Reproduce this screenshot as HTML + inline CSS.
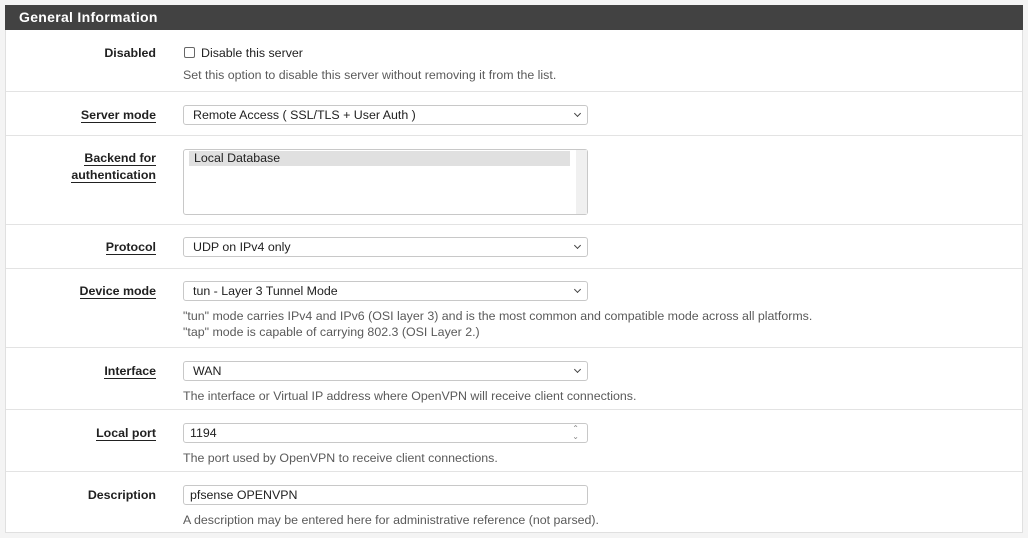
<!DOCTYPE html>
<html><head><style>
body{margin:0;width:1028px;height:538px;background:#f4f4f4;font-family:"Liberation Sans",sans-serif;font-size:12.4px;color:#212121;position:relative;overflow:hidden}
.panel{position:absolute;left:5px;top:5px;width:1018px;height:528px;background:#fff;border:1px solid #e0e0e0;box-sizing:border-box}
.hd{position:absolute;left:5px;top:5px;width:1018px;height:25px;background:#424242;color:#fff;font-size:14px;font-weight:bold;line-height:25px;padding-left:14px;box-sizing:border-box;letter-spacing:.3px}
.ln{position:absolute;left:6px;width:1016px;height:1px;background:#e3e3e3}
.lb{position:absolute;right:872px;font-weight:bold;text-align:right;line-height:17px}
.lb u{text-decoration:none;border-bottom:1px solid #212121}
.ct{position:absolute;left:183px;width:405px;height:20px;border:1px solid #c8c8c8;border-radius:3px;box-sizing:border-box;line-height:18px;padding-left:9px;background:#fff}
.ct.sel::after{content:"";position:absolute;right:7px;top:5px;width:4px;height:4px;border-right:1px solid #444;border-bottom:1px solid #444;transform:rotate(45deg)}
.hp{position:absolute;left:183px;color:#5a5a5a;line-height:16px}
.tx{position:absolute;left:183px;line-height:16px}
</style></head><body>
<div class="panel"></div>
<div class="hd">General Information</div>

<div class="lb" style="top:45px">Disabled</div>
<div style="position:absolute;left:184px;top:47px;width:9px;height:9px;border:1px solid #666;border-radius:2px"></div>
<div class="tx" style="left:201px;top:45px">Disable this server</div>
<div class="hp" style="top:67px">Set this option to disable this server without removing it from the list.</div>
<div class="ln" style="top:91px"></div>

<div class="lb" style="top:107px"><u>Server mode</u></div>
<div class="ct sel" style="top:105px;line-height:19px">Remote Access ( SSL/TLS + User Auth )</div>
<div class="ln" style="top:135px"></div>

<div class="lb" style="top:150px;line-height:17px"><u>Backend for</u><br><u>authentication</u></div>
<div class="ct" style="top:149px;height:66px;padding:0">
<div style="position:absolute;left:5px;top:1px;width:381px;height:15px;background:#e0e0e0;line-height:15px;padding-left:5px;box-sizing:border-box">Local Database</div>
<div style="position:absolute;right:0;top:0;width:11px;height:64px;background:#f0f0f0"></div></div>
<div class="ln" style="top:224px"></div>

<div class="lb" style="top:239px"><u>Protocol</u></div>
<div class="ct sel" style="top:237px;line-height:19px">UDP on IPv4 only</div>
<div class="ln" style="top:268px"></div>

<div class="lb" style="top:283px"><u>Device mode</u></div>
<div class="ct sel" style="top:281px;line-height:19px">tun - Layer 3 Tunnel Mode</div>
<div class="hp" style="top:308px">"tun" mode carries IPv4 and IPv6 (OSI layer 3) and is the most common and compatible mode across all platforms.<br>"tap" mode is capable of carrying 802.3 (OSI Layer 2.)</div>
<div class="ln" style="top:347px"></div>

<div class="lb" style="top:363px"><u>Interface</u></div>
<div class="ct sel" style="top:361px;line-height:19px">WAN</div>
<div class="hp" style="top:388px">The interface or Virtual IP address where OpenVPN will receive client connections.</div>
<div class="ln" style="top:409px"></div>

<div class="lb" style="top:425px"><u>Local port</u></div>
<div class="ct" style="top:423px;padding-left:6px;line-height:19px">1194<span style="position:absolute;right:8px;top:0;font-size:8px;color:#888;line-height:8px;padding-top:1px">&#8963;<br>&#8964;</span></div>
<div class="hp" style="top:450px">The port used by OpenVPN to receive client connections.</div>
<div class="ln" style="top:471px"></div>

<div class="lb" style="top:487px">Description</div>
<div class="ct" style="top:485px;padding-left:6px;line-height:19px">pfsense OPENVPN</div>
<div class="hp" style="top:512px">A description may be entered here for administrative reference (not parsed).</div>
</body></html>
